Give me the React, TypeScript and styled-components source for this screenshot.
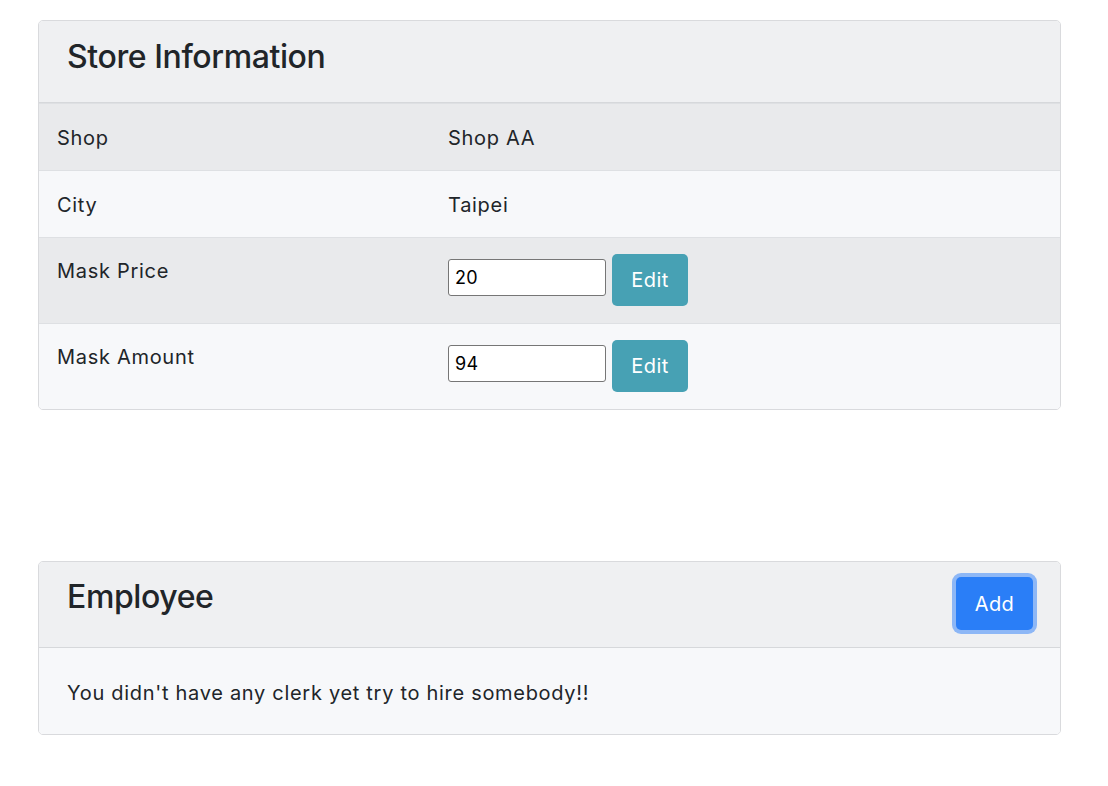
import React from "react";
import styled, { createGlobalStyle } from "styled-components";

const GlobalStyle = createGlobalStyle`
  * { box-sizing: border-box; }
  html, body { margin: 0; padding: 0; background: #ffffff; }
  body {
    font-family: Inter, "Noto Sans", "Liberation Sans", sans-serif;
    color: #212529;
    font-size: 20px;
    line-height: 30px;
  }
`;

const Page = styled.div`
  width: 1023px;
  margin: 20px 0 0 38px;
  display: flex;
  flex-direction: column;
  gap: 151px;
`;

const Card = styled.section`
  border: 1px solid #d9dadd;
  border-radius: 5px;
  overflow: hidden;
  background: #ffffff;
`;

const CardHeader = styled.header<{ $compact?: boolean }>`
  display: flex;
  align-items: flex-start;
  justify-content: space-between;
  background: #eff0f2;
  border-bottom: 1px solid #d6d8db;
  height: ${(p) => (p.$compact ? "86px" : "82px")};
  padding: ${(p) => (p.$compact ? "15px 27px 0 28px" : "16px 27px 0 28px")};
`;

const Title = styled.h3`
  margin: 0;
  font-size: 32px;
  font-weight: 500;
  line-height: 40px;
  letter-spacing: -0.4px;
  color: #212529;
`;

const Table = styled.div`
  display: flex;
  flex-direction: column;
`;

const Row = styled.div<{ $odd: boolean }>`
  display: grid;
  grid-template-columns: 391px 1fr;
  border-top: 1px solid #dee0e3;
  background: ${(p) => (p.$odd ? "#e9eaec" : "#f7f8fa")};
`;

const Cell = styled.div<{ $tight?: boolean; $label?: boolean }>`
  padding: ${(p) =>
    p.$tight && !p.$label ? "16px 18px 17px" : p.$tight ? "18px 18px 0" : "19px 18px 17px"};
  font-size: 20px;
  line-height: 30px;
  letter-spacing: 0.7px;
  display: flex;
  align-items: baseline;
  gap: 6px;
`;

const NumberInput = styled.input`
  width: 158px;
  height: 37px;
  border: 1px solid #767676;
  border-radius: 3px;
  padding: 0 6px;
  font-family: Inter, "Liberation Sans", Arial, sans-serif;
  font-size: 18px;
  letter-spacing: 0.3px;
  color: #000;
  background: #fff;
  position: relative;
  top: -3px;
`;

const Button = styled.button<{ $variant: "info" | "primary" }>`
  font-family: Inter, "Noto Sans", sans-serif;
  font-size: 20px;
  line-height: 30px;
  letter-spacing: 0.4px;
  color: #ffffff;
  border: none;
  border-radius: 5px;
  padding: 11px 0;
  cursor: pointer;
  background: ${(p) => (p.$variant === "info" ? "#47a1b4" : "#2a7ef7")};
  box-shadow: ${(p) =>
    p.$variant === "primary" ? "0 0 0 4px #8db7f6" : "none"};
  height: ${(p) => (p.$variant === "primary" ? "53px" : "52px")};
  width: ${(p) => (p.$variant === "primary" ? "77px" : "76px")};
`;

const CardBody = styled.div`
  background: #f7f8fa;
  padding: 30px 28px 26px;
  font-size: 20px;
  line-height: 30px;
  letter-spacing: 0.7px;
`;

type Item = { label: string; value?: string; editable?: string };

const items: Item[] = [
  { label: "Shop", value: "Shop AA" },
  { label: "City", value: "Taipei" },
  { label: "Mask Price", editable: "20" },
  { label: "Mask Amount", editable: "94" },
];

export default function App() {
  return (
    <>
      <GlobalStyle />
      <Page>
        <Card>
          <CardHeader>
            <Title>Store Information</Title>
          </CardHeader>
          <Table>
            {items.map((it, i) => (
              <Row key={it.label} $odd={i % 2 === 0}>
                <Cell $tight={!!it.editable} $label>
                  {it.label}
                </Cell>
                <Cell $tight={!!it.editable}>
                  {it.editable ? (
                    <>
                      <NumberInput type="text" defaultValue={it.editable} />
                      <Button $variant="info">Edit</Button>
                    </>
                  ) : (
                    it.value
                  )}
                </Cell>
              </Row>
            ))}
          </Table>
        </Card>
        <Card>
          <CardHeader $compact>
            <Title>Employee</Title>
            <Button $variant="primary">Add</Button>
          </CardHeader>
          <CardBody>You didn't have any clerk yet try to hire somebody!!</CardBody>
        </Card>
      </Page>
    </>
  );
}
